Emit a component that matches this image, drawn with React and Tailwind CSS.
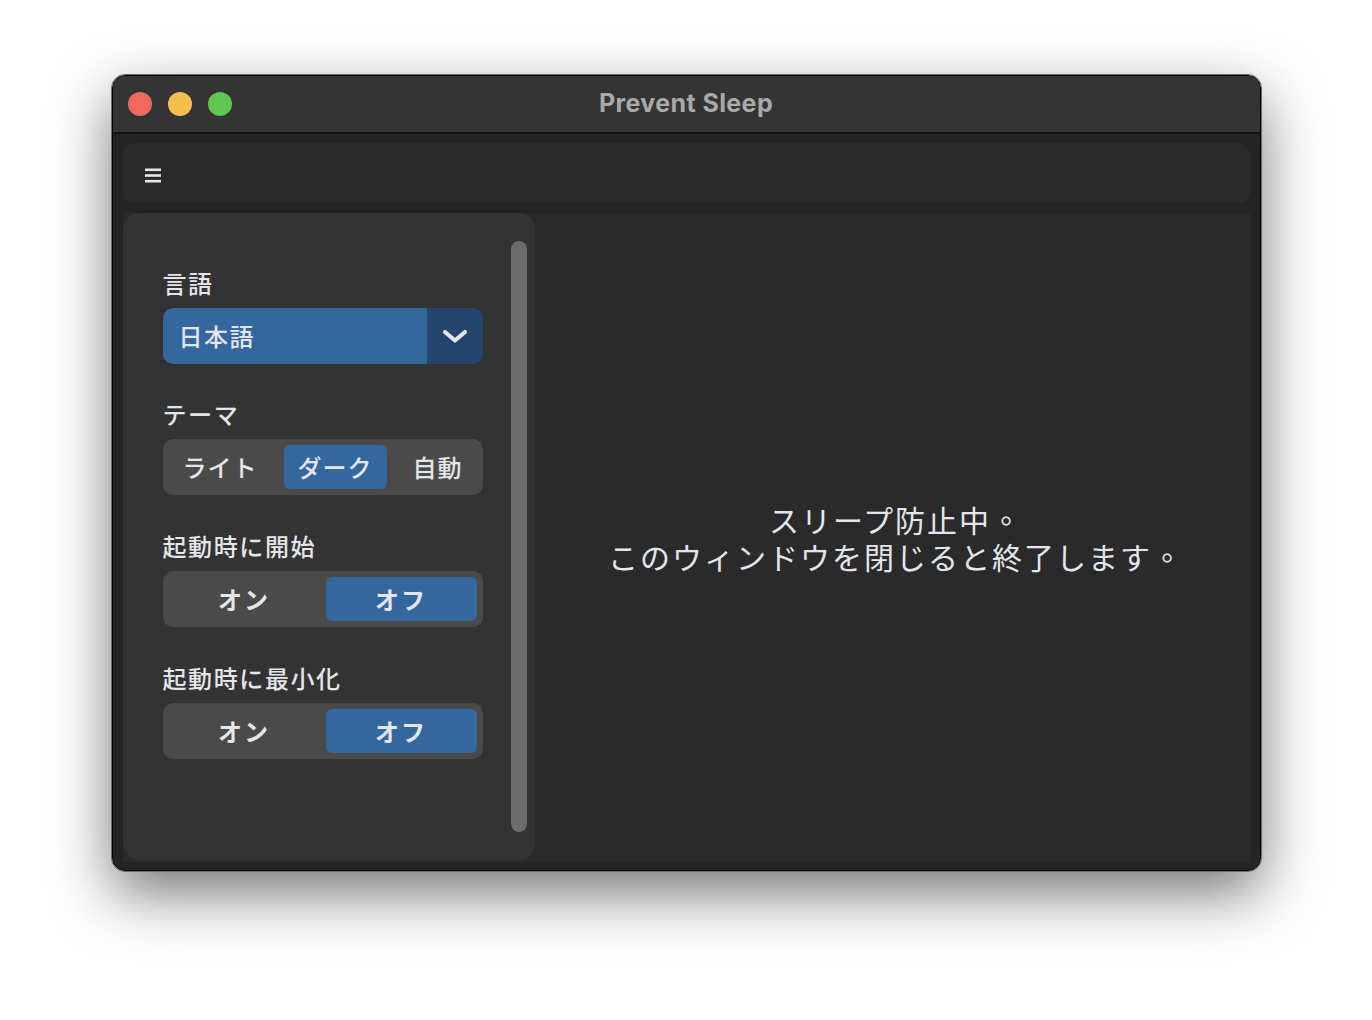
import { useState } from 'react';

const jp = { fontFamily: '"Noto Sans CJK JP", "Noto Sans", sans-serif' };
const tc = { fontFamily: '"Noto Sans CJK TC", "Noto Sans CJK JP", sans-serif' };

const TrafficLights = () => (
  <div className="flex items-center gap-4 pl-[15px]">
    <span className="w-6 h-6 rounded-full bg-[#ee6a5f]" />
    <span className="w-6 h-6 rounded-full bg-[#f5bf4f]" />
    <span className="w-6 h-6 rounded-full bg-[#61c554]" />
  </div>
);

const Label = ({ children }) => (
  <div className="text-[24px] leading-[32px] font-medium tracking-[1.6px] text-[#e4e6eb]">{children}</div>
);

const Segmented = ({ options, value, onChange }) => (
  <div className="flex justify-between h-[56px] p-[6px] rounded-[10px] bg-[#4a4a4a]">
    {options.map(opt => (
      <button
        key={opt}
        onClick={() => onChange(opt)}
        className={`px-[14px] rounded-[6px] text-[24px] font-medium tracking-[1px] text-[#e4e6eb] ${value === opt ? 'bg-[#35679f]' : ''}`}
      >
        {opt}
      </button>
    ))}
  </div>
);

const Toggle = ({ value, onChange }) => (
  <div className="grid grid-cols-2 gap-[6px] h-[56px] p-[6px] rounded-[10px] bg-[#4a4a4a]">
    {['オン', 'オフ'].map(opt => (
      <button
        key={opt}
        onClick={() => onChange(opt)}
        className={`rounded-[6px] text-[24px] font-bold tracking-[2px] text-[#e4e6eb] ${value === opt ? 'bg-[#35679f]' : ''}`}
      >
        {opt}
      </button>
    ))}
  </div>
);

export default function App() {
  const [theme, setTheme] = useState('ダーク');
  const [startOn, setStartOn] = useState('オフ');
  const [minOn, setMinOn] = useState('オフ');

  return (
    <div className="w-[1372px] h-[1020px] bg-white pt-[75px]" style={jp}>
      <div className="mx-auto w-[1149px] h-[796px] rounded-[13px] border border-black outline outline-[#6e6e6e] bg-[#242424] overflow-hidden shadow-[0_22px_60px_rgba(0,0,0,0.55)] flex flex-col">
        {/* title bar */}
        <div className="relative h-[58px] shrink-0 flex items-center bg-[#343434] border-b-2 border-[#111]">
          <TrafficLights />
          <div
            className="absolute inset-0 flex items-center justify-center text-[25px] font-bold tracking-[0.4px] text-[#a9a9a9]"
            style={{ fontFamily: 'Inter, "Liberation Sans", sans-serif' }}
          >
            Prevent Sleep
          </div>
        </div>

        <div className="flex-1 flex flex-col px-[10px] pt-[9px] pb-[8px] gap-[10px]">
          {/* toolbar */}
          <div className="h-[60px] shrink-0 rounded-[10px] bg-[#2a2a2a] flex items-center pl-[22px] pt-[5px]">
            <svg width="16" height="15" viewBox="0 0 16 15">
              <rect x="0" y="0.5" width="16" height="2.6" fill="#e4e6eb" />
              <rect x="0" y="6.2" width="16" height="2.6" fill="#e4e6eb" />
              <rect x="0" y="11.9" width="16" height="2.6" fill="#e4e6eb" />
            </svg>
          </div>

          {/* body */}
          <div className="flex-1 flex bg-[#2a2a2a]">
            <div className="w-[412px] mb-[2px] rounded-[16px] bg-[#333333] flex pl-10 pr-2 py-[28px] gap-[28px]">
              <div className="w-[320px] pt-[26px] flex flex-col">
                <Label>言語</Label>
                <div className="mt-[9px] h-[56px] flex rounded-[10px] overflow-hidden">
                  <div className="flex-1 bg-[#35679f] flex items-center pl-4 text-[24px] font-medium tracking-[1.5px] text-[#e4e6eb]">日本語</div>
                  <div className="w-[56px] bg-[#24466d] flex items-center justify-center">
                    <svg width="26" height="16" viewBox="0 0 26 16">
                      <polyline points="3,4 13,12.5 23,4" fill="none" stroke="#e4e6eb" strokeWidth="4.2" strokeLinecap="round" strokeLinejoin="round" />
                    </svg>
                  </div>
                </div>

                <div className="mt-[34px]"><Label>テーマ</Label></div>
                <div className="mt-[9px]">
                  <Segmented options={['ライト', 'ダーク', '自動']} value={theme} onChange={setTheme} />
                </div>

                <div className="mt-[35px]"><Label>起動時に開始</Label></div>
                <div className="mt-[9px]">
                  <Toggle value={startOn} onChange={setStartOn} />
                </div>

                <div className="mt-[35px]"><Label>起動時に最小化</Label></div>
                <div className="mt-[9px]">
                  <Toggle value={minOn} onChange={setMinOn} />
                </div>
              </div>
              <div className="w-4 rounded-full bg-[#6b6b6b]" />
            </div>

            <div className="flex-1 flex items-center justify-center pl-[8px]">
              <div className="flex flex-col items-center text-[30px] leading-[37px] tracking-[2px] text-[#e3e6ee]">
                <p>スリープ防止中<span style={tc}>。</span></p>
                <p>このウィンドウを閉じると終了します<span style={tc}>。</span></p>
              </div>
            </div>
          </div>
        </div>
      </div>
    </div>
  );
}
